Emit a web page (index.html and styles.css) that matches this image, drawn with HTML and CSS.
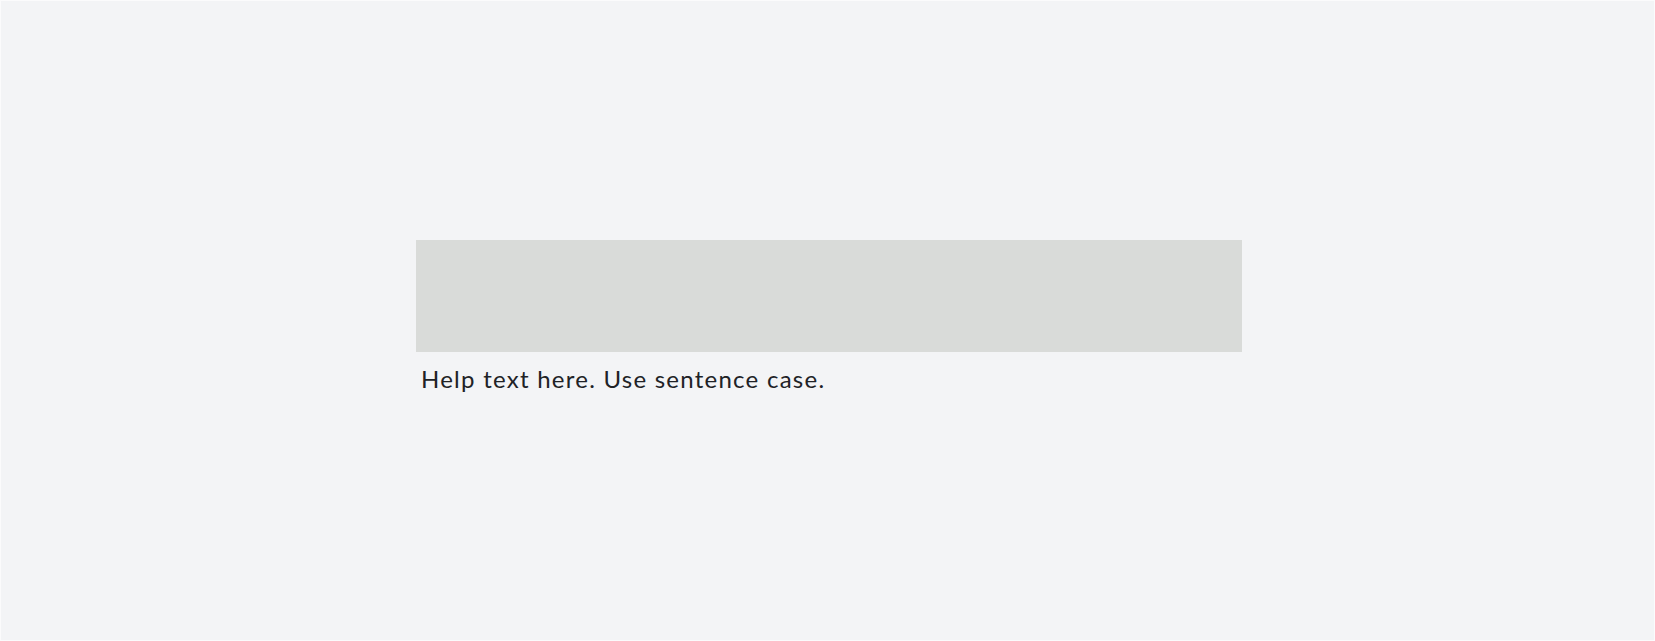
FILE: index.html
```html
<!DOCTYPE html>
<html lang="en">
<head>
<meta charset="utf-8">
<title>Help text</title>
<link rel="stylesheet" href="styles.css">
</head>
<body>
<main class="frame">
  <div class="field">
    <div class="placeholder"></div>
    <p class="help">Help text here. Use sentence case.</p>
  </div>
</main>
</body>
</html>
```
FILE: styles.css
```css
html, body {
  margin: 0;
  padding: 0;
}
body {
  width: 1655px;
  height: 641px;
  background: #f3f4f6;
  font-family: Lato, "Liberation Sans", sans-serif;
}
.frame {
  box-sizing: border-box;
  width: 1655px;
  height: 641px;
  border: 1px solid #fbfbfc;
  background: #f3f4f6;
  padding: 239px 0 0 415px;
}
.field {
  width: 826px;
}
.placeholder {
  height: 112px;
  background: #d9dbd9;
}
.help {
  margin: 0;
  padding: 12px 0 0 5px;
  font-size: 24px;
  line-height: 30px;
  color: #202226;
  letter-spacing: 1.25px;
}
```
